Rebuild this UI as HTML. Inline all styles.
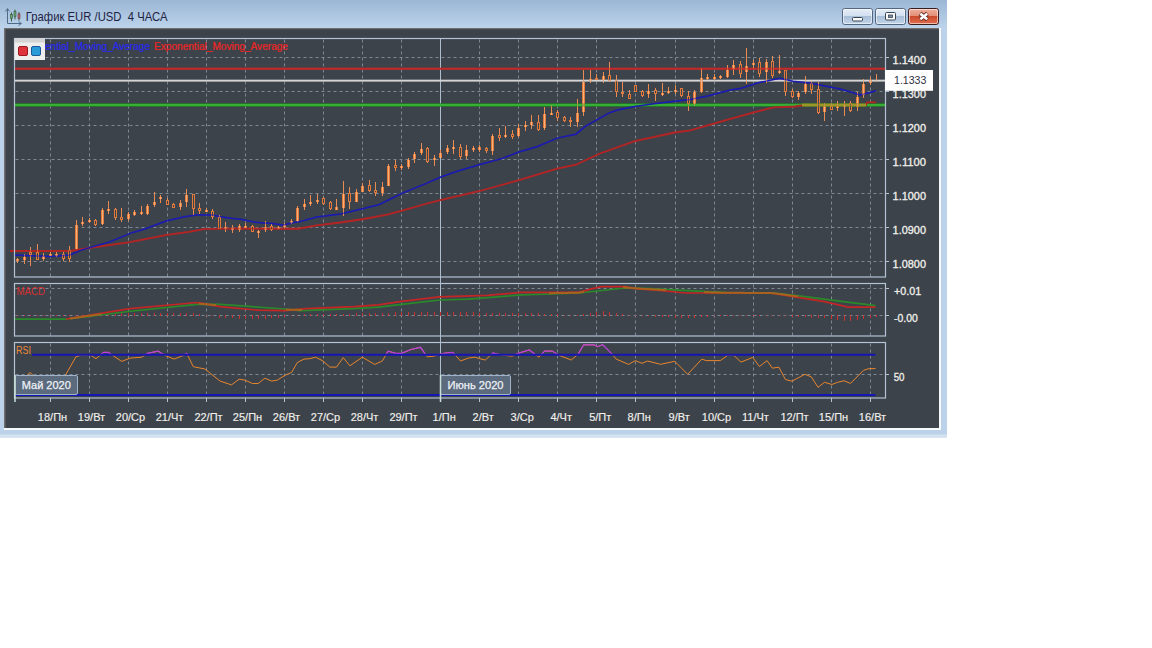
<!DOCTYPE html><html><head><meta charset="utf-8"><style>html,body{margin:0;padding:0;background:#fff;width:1152px;height:648px;overflow:hidden}svg{display:block}text{font-family:"Liberation Sans",sans-serif}</style></head><body>
<svg width="1152" height="648" viewBox="0 0 1152 648">
<defs><linearGradient id="tg" x1="0" y1="0" x2="0" y2="1"><stop offset="0" stop-color="#9bb6d4"/><stop offset="1" stop-color="#bcd3eb"/></linearGradient><linearGradient id="bg1" x1="0" y1="0" x2="0" y2="1"><stop offset="0" stop-color="#e6eef8"/><stop offset="0.45" stop-color="#d2e0f0"/><stop offset="0.5" stop-color="#a9bfd8"/><stop offset="1" stop-color="#c3d5ea"/></linearGradient><linearGradient id="bg2" x1="0" y1="0" x2="0" y2="1"><stop offset="0" stop-color="#f0b0a0"/><stop offset="0.45" stop-color="#e49078"/><stop offset="0.5" stop-color="#cc4a2c"/><stop offset="1" stop-color="#e07050"/></linearGradient></defs>
<rect x="0" y="0" width="947" height="437.5" fill="#bcd2ea"/>
<rect x="0" y="0" width="947" height="28" fill="url(#tg)"/>
<rect x="0" y="434.5" width="947" height="3" fill="#d4e1ef"/>
<rect x="5" y="29" width="934" height="399" fill="#3c434b"/>
<rect x="4" y="28" width="935" height="1.2" fill="#6f6e6c"/>
<rect x="4" y="28" width="1.5" height="400" fill="#6f6e6c"/>
<rect x="939" y="28" width="2" height="402" fill="#f6f9fc"/>
<rect x="4" y="428" width="937" height="2" fill="#f6f9fc"/>
<g fill="none" stroke-linecap="square"><path d="M7.5 9 V23.5 H21" stroke="#4f6a88" stroke-width="1"/><path d="M5.8 11 L7.5 8.8 L9.2 11 M19 21.8 L21.3 23.5 L19 25.2" stroke="#4f6a88" stroke-width="1"/><path d="M11.5 13 V21 M15 10 V19 M19 12.5 V20" stroke="#3e5a48" stroke-width="1"/></g><rect x="10.5" y="14.5" width="2" height="4" fill="#6aa86a" stroke="#305a40" stroke-width="0.6"/><rect x="14" y="11.5" width="2" height="5" fill="#6aa86a" stroke="#305a40" stroke-width="0.6"/><rect x="18" y="14" width="2" height="4.5" fill="#b07070" stroke="#6a3040" stroke-width="0.6"/>
<text x="25.8" y="21" font-size="11.9" fill="#221f44" textLength="141.7" lengthAdjust="spacingAndGlyphs" xml:space="preserve">График EUR /USD&#160; 4 ЧАСА</text>
<rect x="842.5" y="8.5" width="30" height="16" rx="2.2" fill="url(#bg1)" stroke="#55677e" stroke-width="1"/>
<rect x="843.5" y="9.5" width="28" height="14" rx="1.5" fill="none" stroke="rgba(255,255,255,0.55)" stroke-width="1"/>
<rect x="875.5" y="8.5" width="30" height="16" rx="2.2" fill="url(#bg1)" stroke="#55677e" stroke-width="1"/>
<rect x="876.5" y="9.5" width="28" height="14" rx="1.5" fill="none" stroke="rgba(255,255,255,0.55)" stroke-width="1"/>
<rect x="908.5" y="8.5" width="30" height="16" rx="2.2" fill="url(#bg2)" stroke="#3a1c1c" stroke-width="1"/>
<rect x="909.5" y="9.5" width="28" height="14" rx="1.5" fill="none" stroke="rgba(255,255,255,0.55)" stroke-width="1"/>
<rect x="852.5" y="17.5" width="10" height="3.5" rx="1" fill="#fafafa" stroke="#3a4656" stroke-width="1"/>
<rect x="885.5" y="12.5" width="10" height="7.5" rx="1" fill="#fafafa" stroke="#3a4656" stroke-width="1"/>
<rect x="888.5" y="15" width="4" height="2.5" fill="#7f8fa0" stroke="#3a4656" stroke-width="0.8"/>
<path d="M920 13.5 L927.5 19.5 M927.5 13.5 L920 19.5" stroke="#6a3028" stroke-width="4.4" stroke-linecap="butt"/>
<path d="M920.3 13.8 L927.2 19.2 M927.2 13.8 L920.3 19.2" stroke="#ffffff" stroke-width="2.6" stroke-linecap="butt"/>
<g stroke="#7e8892" stroke-width="1" stroke-dasharray="3,3" fill="none">
<path d="M50.5 39.5 V277"/>
<path d="M89.5 39.5 V277"/>
<path d="M128.5 39.5 V277"/>
<path d="M167.5 39.5 V277"/>
<path d="M206.5 39.5 V277"/>
<path d="M245.5 39.5 V277"/>
<path d="M284.5 39.5 V277"/>
<path d="M323.5 39.5 V277"/>
<path d="M362.5 39.5 V277"/>
<path d="M401.5 39.5 V277"/>
<path d="M479.5 39.5 V277"/>
<path d="M518.5 39.5 V277"/>
<path d="M557.5 39.5 V277"/>
<path d="M596.5 39.5 V277"/>
<path d="M635.5 39.5 V277"/>
<path d="M675.5 39.5 V277"/>
<path d="M714.5 39.5 V277"/>
<path d="M753.5 39.5 V277"/>
<path d="M792.5 39.5 V277"/>
<path d="M831.5 39.5 V277"/>
<path d="M870.5 39.5 V277"/>
<path d="M50.5 284.5 V336"/>
<path d="M89.5 284.5 V336"/>
<path d="M128.5 284.5 V336"/>
<path d="M167.5 284.5 V336"/>
<path d="M206.5 284.5 V336"/>
<path d="M245.5 284.5 V336"/>
<path d="M284.5 284.5 V336"/>
<path d="M323.5 284.5 V336"/>
<path d="M362.5 284.5 V336"/>
<path d="M401.5 284.5 V336"/>
<path d="M479.5 284.5 V336"/>
<path d="M518.5 284.5 V336"/>
<path d="M557.5 284.5 V336"/>
<path d="M596.5 284.5 V336"/>
<path d="M635.5 284.5 V336"/>
<path d="M675.5 284.5 V336"/>
<path d="M714.5 284.5 V336"/>
<path d="M753.5 284.5 V336"/>
<path d="M792.5 284.5 V336"/>
<path d="M831.5 284.5 V336"/>
<path d="M870.5 284.5 V336"/>
<path d="M50.5 343.5 V398"/>
<path d="M89.5 343.5 V398"/>
<path d="M128.5 343.5 V398"/>
<path d="M167.5 343.5 V398"/>
<path d="M206.5 343.5 V398"/>
<path d="M245.5 343.5 V398"/>
<path d="M284.5 343.5 V398"/>
<path d="M323.5 343.5 V398"/>
<path d="M362.5 343.5 V398"/>
<path d="M401.5 343.5 V398"/>
<path d="M479.5 343.5 V398"/>
<path d="M518.5 343.5 V398"/>
<path d="M557.5 343.5 V398"/>
<path d="M596.5 343.5 V398"/>
<path d="M635.5 343.5 V398"/>
<path d="M675.5 343.5 V398"/>
<path d="M714.5 343.5 V398"/>
<path d="M753.5 343.5 V398"/>
<path d="M792.5 343.5 V398"/>
<path d="M831.5 343.5 V398"/>
<path d="M870.5 343.5 V398"/>
<path d="M15.5 57.5 H885.5"/>
<path d="M15.5 91.5 H885.5"/>
<path d="M15.5 125.5 H885.5"/>
<path d="M15.5 159.5 H885.5"/>
<path d="M15.5 193.5 H885.5"/>
<path d="M15.5 227.5 H885.5"/>
<path d="M15.5 261.5 H885.5"/>
<path d="M15.5 288.5 H885.5"/>
<path d="M15.5 315.5 H885.5"/>
<path d="M15.5 374.5 H885.5"/>
</g>
<path d="M440.5 38.5 V402" stroke="#aebdcc" stroke-width="1"/>
<g stroke="#b3c3d3" stroke-width="1">
<path d="M885.5 57.5 H889"/>
<path d="M885.5 91.5 H889"/>
<path d="M885.5 125.5 H889"/>
<path d="M885.5 159.5 H889"/>
<path d="M885.5 193.5 H889"/>
<path d="M885.5 227.5 H889"/>
<path d="M885.5 261.5 H889"/>
<path d="M885.5 288.5 H889"/>
<path d="M885.5 315.5 H889"/>
<path d="M885.5 374.5 H889"/>
<path d="M50.5 398 V402"/>
<path d="M89.5 398 V402"/>
<path d="M128.5 398 V402"/>
<path d="M167.5 398 V402"/>
<path d="M206.5 398 V402"/>
<path d="M245.5 398 V402"/>
<path d="M284.5 398 V402"/>
<path d="M323.5 398 V402"/>
<path d="M362.5 398 V402"/>
<path d="M401.5 398 V402"/>
<path d="M440.5 398 V402"/>
<path d="M479.5 398 V402"/>
<path d="M518.5 398 V402"/>
<path d="M557.5 398 V402"/>
<path d="M596.5 398 V402"/>
<path d="M635.5 398 V402"/>
<path d="M675.5 398 V402"/>
<path d="M714.5 398 V402"/>
<path d="M753.5 398 V402"/>
<path d="M792.5 398 V402"/>
<path d="M831.5 398 V402"/>
<path d="M870.5 398 V402"/>
</g>
<path d="M15 68.8 H885" stroke="#c22a2a" stroke-width="2"/>
<path d="M15 80.6 H885" stroke="#d4d4d4" stroke-width="1.6"/>
<path d="M15 105 H885" stroke="#1c8a1c" stroke-width="3"/>
<path d="M15 105 H885" stroke="#52d452" stroke-width="1.2"/>
<polyline points="10,251 69.9,251 89.9,247.9 130,242.2 166.9,234.8 189,231.9 203.8,229.2 221.7,228.7 298,228.75 316.9,225.3 340.3,222.5 363.8,219 387.2,214.7 401.3,210.8 426.3,203.75 440.3,200.2 479,191.25 518.1,180.3 557.2,168.6 575.9,164.7 600,153.5 634.7,141.2 674.7,132.5 690.3,130.3 712.8,123.9 752.8,112.6 773.6,107.4 794.4,106.5 805,105 866,105 867,102.3 876,102.3" fill="none" stroke="#b02626" stroke-width="1.8"/>
<path d="M802 105 H866" stroke="#8a8424" stroke-width="3"/>
<path d="M802 105 H866" stroke="#b0a830" stroke-width="1.2"/>
<polyline points="15,255 50,256.6 69.9,255 81.9,249.9 109.8,241.9 130,233.4 144.8,229 166.9,220.8 186.1,216.4 196.4,214.9 212.6,214.9 221.5,217.1 233.3,218.6 242.2,219.4 255.4,222.3 274.6,223.8 283.5,225.3 290.9,223 300,221.6 316.9,217 340.3,213.9 363.8,208.4 379.4,204.5 401.3,193.6 426.3,183.4 440.3,177.2 455.6,171.7 479,164.7 502.5,158.4 518.1,152.2 536.9,146.7 557.2,138.1 575.9,134.2 585.3,126.4 596.3,120.2 608.8,113.1 617.4,110 634.7,106.5 652,103.9 674.7,101.3 690.3,99.5 707.6,96 730.2,90 740,88.6 760,82.3 780,78.3 793,81.3 810,82.9 825,86 840,89 850,91.7 860,95 870,92.5 876,90.8" fill="none" stroke="#1c1cb0" stroke-width="1.5"/>
<g shape-rendering="crispEdges">
<rect x="17" y="258" width="1" height="5" fill="#ea8c52"/>
<rect x="16" y="259" width="3" height="2" fill="#e2783a"/>
<rect x="17" y="259" width="1" height="2" fill="#f7b078"/>
<rect x="24" y="254" width="1" height="10" fill="#ea8c52"/>
<rect x="23" y="257" width="3" height="3" fill="#e2783a"/>
<rect x="24" y="257" width="1" height="3" fill="#f7b078"/>
<rect x="30" y="247" width="1" height="19" fill="#ea8c52"/>
<rect x="29" y="252" width="3" height="3" fill="#e2783a"/>
<rect x="30" y="253" width="1" height="1" fill="#3c434b"/>
<rect x="37" y="244" width="1" height="16" fill="#ea8c52"/>
<rect x="36" y="252" width="3" height="8" fill="#e2783a"/>
<rect x="37" y="253" width="1" height="6" fill="#3c434b"/>
<rect x="43" y="253" width="1" height="8" fill="#ea8c52"/>
<rect x="42" y="256" width="3" height="3" fill="#e2783a"/>
<rect x="43" y="256" width="1" height="3" fill="#f7b078"/>
<rect x="50" y="252" width="1" height="4" fill="#ea8c52"/>
<rect x="49" y="254" width="3" height="2" fill="#e2783a"/>
<rect x="50" y="254" width="1" height="2" fill="#f7b078"/>
<rect x="56" y="252" width="1" height="5" fill="#ea8c52"/>
<rect x="55" y="254" width="3" height="2" fill="#e2783a"/>
<rect x="56" y="254" width="1" height="2" fill="#f7b078"/>
<rect x="63" y="252" width="1" height="9" fill="#ea8c52"/>
<rect x="62" y="254" width="3" height="5" fill="#e2783a"/>
<rect x="63" y="255" width="1" height="3" fill="#3c434b"/>
<rect x="69" y="246" width="1" height="16" fill="#ea8c52"/>
<rect x="68" y="250" width="3" height="9" fill="#e2783a"/>
<rect x="69" y="251" width="1" height="7" fill="#3c434b"/>
<rect x="76" y="220" width="1" height="29" fill="#ea8c52"/>
<rect x="75" y="225" width="3" height="24" fill="#e2783a"/>
<rect x="76" y="225" width="1" height="24" fill="#f7b078"/>
<rect x="82" y="217" width="1" height="9" fill="#ea8c52"/>
<rect x="81" y="222" width="3" height="2" fill="#e2783a"/>
<rect x="82" y="222" width="1" height="2" fill="#f7b078"/>
<rect x="89" y="218" width="1" height="5" fill="#ea8c52"/>
<rect x="88" y="220" width="3" height="2" fill="#e2783a"/>
<rect x="89" y="220" width="1" height="2" fill="#f7b078"/>
<rect x="95" y="219" width="1" height="7" fill="#ea8c52"/>
<rect x="94" y="220" width="3" height="5" fill="#e2783a"/>
<rect x="95" y="221" width="1" height="3" fill="#3c434b"/>
<rect x="102" y="208" width="1" height="17" fill="#ea8c52"/>
<rect x="101" y="210" width="3" height="14" fill="#e2783a"/>
<rect x="102" y="210" width="1" height="14" fill="#f7b078"/>
<rect x="108" y="201" width="1" height="13" fill="#ea8c52"/>
<rect x="107" y="209" width="3" height="2" fill="#e2783a"/>
<rect x="108" y="209" width="1" height="2" fill="#f7b078"/>
<rect x="115" y="208" width="1" height="12" fill="#ea8c52"/>
<rect x="114" y="209" width="3" height="9" fill="#e2783a"/>
<rect x="115" y="210" width="1" height="7" fill="#3c434b"/>
<rect x="121" y="208" width="1" height="14" fill="#ea8c52"/>
<rect x="120" y="217" width="3" height="3" fill="#e2783a"/>
<rect x="121" y="218" width="1" height="1" fill="#3c434b"/>
<rect x="128" y="212" width="1" height="9" fill="#ea8c52"/>
<rect x="127" y="214" width="3" height="5" fill="#e2783a"/>
<rect x="128" y="214" width="1" height="5" fill="#f7b078"/>
<rect x="134" y="210" width="1" height="6" fill="#ea8c52"/>
<rect x="133" y="212" width="3" height="3" fill="#e2783a"/>
<rect x="134" y="212" width="1" height="3" fill="#f7b078"/>
<rect x="141" y="206" width="1" height="9" fill="#ea8c52"/>
<rect x="140" y="212" width="3" height="2" fill="#e2783a"/>
<rect x="141" y="212" width="1" height="2" fill="#f7b078"/>
<rect x="147" y="204" width="1" height="11" fill="#ea8c52"/>
<rect x="146" y="206" width="3" height="8" fill="#e2783a"/>
<rect x="147" y="206" width="1" height="8" fill="#f7b078"/>
<rect x="154" y="192" width="1" height="15" fill="#ea8c52"/>
<rect x="153" y="202" width="3" height="3" fill="#e2783a"/>
<rect x="154" y="202" width="1" height="3" fill="#f7b078"/>
<rect x="160" y="195" width="1" height="8" fill="#ea8c52"/>
<rect x="159" y="197" width="3" height="2" fill="#e2783a"/>
<rect x="160" y="197" width="1" height="2" fill="#f7b078"/>
<rect x="167" y="198" width="1" height="7" fill="#ea8c52"/>
<rect x="166" y="200" width="3" height="5" fill="#e2783a"/>
<rect x="167" y="201" width="1" height="3" fill="#3c434b"/>
<rect x="173" y="203" width="1" height="5" fill="#ea8c52"/>
<rect x="172" y="204" width="3" height="4" fill="#e2783a"/>
<rect x="173" y="205" width="1" height="2" fill="#3c434b"/>
<rect x="180" y="200" width="1" height="10" fill="#ea8c52"/>
<rect x="179" y="203" width="3" height="4" fill="#e2783a"/>
<rect x="180" y="203" width="1" height="4" fill="#f7b078"/>
<rect x="186" y="189" width="1" height="18" fill="#ea8c52"/>
<rect x="185" y="195" width="3" height="7" fill="#e2783a"/>
<rect x="186" y="195" width="1" height="7" fill="#f7b078"/>
<rect x="193" y="194" width="1" height="21" fill="#ea8c52"/>
<rect x="192" y="194" width="3" height="15" fill="#e2783a"/>
<rect x="193" y="195" width="1" height="13" fill="#3c434b"/>
<rect x="199" y="203" width="1" height="11" fill="#ea8c52"/>
<rect x="198" y="208" width="3" height="3" fill="#e2783a"/>
<rect x="199" y="209" width="1" height="1" fill="#3c434b"/>
<rect x="206" y="208" width="1" height="4" fill="#ea8c52"/>
<rect x="205" y="210" width="3" height="2" fill="#e2783a"/>
<rect x="206" y="210" width="1" height="2" fill="#f7b078"/>
<rect x="212" y="209" width="1" height="10" fill="#ea8c52"/>
<rect x="211" y="211" width="3" height="6" fill="#e2783a"/>
<rect x="212" y="212" width="1" height="4" fill="#3c434b"/>
<rect x="219" y="215" width="1" height="14" fill="#ea8c52"/>
<rect x="218" y="217" width="3" height="12" fill="#e2783a"/>
<rect x="219" y="218" width="1" height="10" fill="#3c434b"/>
<rect x="225" y="222" width="1" height="10" fill="#ea8c52"/>
<rect x="224" y="227" width="3" height="2" fill="#e2783a"/>
<rect x="225" y="227" width="1" height="2" fill="#f7b078"/>
<rect x="232" y="225" width="1" height="8" fill="#ea8c52"/>
<rect x="231" y="228" width="3" height="2" fill="#e2783a"/>
<rect x="232" y="228" width="1" height="2" fill="#f7b078"/>
<rect x="239" y="224" width="1" height="8" fill="#ea8c52"/>
<rect x="238" y="226" width="3" height="4" fill="#e2783a"/>
<rect x="239" y="226" width="1" height="4" fill="#f7b078"/>
<rect x="245" y="223" width="1" height="4" fill="#ea8c52"/>
<rect x="244" y="226" width="3" height="2" fill="#e2783a"/>
<rect x="245" y="226" width="1" height="2" fill="#f7b078"/>
<rect x="252" y="225" width="1" height="7" fill="#ea8c52"/>
<rect x="251" y="226" width="3" height="6" fill="#e2783a"/>
<rect x="252" y="227" width="1" height="4" fill="#3c434b"/>
<rect x="258" y="230" width="1" height="8" fill="#ea8c52"/>
<rect x="257" y="231" width="3" height="2" fill="#e2783a"/>
<rect x="258" y="231" width="1" height="2" fill="#f7b078"/>
<rect x="265" y="221" width="1" height="11" fill="#ea8c52"/>
<rect x="264" y="227" width="3" height="3" fill="#e2783a"/>
<rect x="265" y="227" width="1" height="3" fill="#f7b078"/>
<rect x="271" y="224" width="1" height="7" fill="#ea8c52"/>
<rect x="270" y="226" width="3" height="4" fill="#e2783a"/>
<rect x="271" y="227" width="1" height="2" fill="#3c434b"/>
<rect x="278" y="226" width="1" height="3" fill="#ea8c52"/>
<rect x="277" y="227" width="3" height="2" fill="#e2783a"/>
<rect x="278" y="227" width="1" height="2" fill="#f7b078"/>
<rect x="284" y="223" width="1" height="6" fill="#ea8c52"/>
<rect x="283" y="225" width="3" height="2" fill="#e2783a"/>
<rect x="284" y="225" width="1" height="2" fill="#f7b078"/>
<rect x="291" y="219" width="1" height="5" fill="#ea8c52"/>
<rect x="290" y="221" width="3" height="2" fill="#e2783a"/>
<rect x="291" y="221" width="1" height="2" fill="#f7b078"/>
<rect x="297" y="206" width="1" height="16" fill="#ea8c52"/>
<rect x="296" y="208" width="3" height="13" fill="#e2783a"/>
<rect x="297" y="208" width="1" height="13" fill="#f7b078"/>
<rect x="304" y="199" width="1" height="11" fill="#ea8c52"/>
<rect x="303" y="204" width="3" height="3" fill="#e2783a"/>
<rect x="304" y="204" width="1" height="3" fill="#f7b078"/>
<rect x="310" y="195" width="1" height="11" fill="#ea8c52"/>
<rect x="309" y="202" width="3" height="2" fill="#e2783a"/>
<rect x="310" y="202" width="1" height="2" fill="#f7b078"/>
<rect x="317" y="194" width="1" height="10" fill="#ea8c52"/>
<rect x="316" y="200" width="3" height="2" fill="#e2783a"/>
<rect x="317" y="200" width="1" height="2" fill="#f7b078"/>
<rect x="323" y="197" width="1" height="8" fill="#ea8c52"/>
<rect x="322" y="198" width="3" height="6" fill="#e2783a"/>
<rect x="323" y="199" width="1" height="4" fill="#3c434b"/>
<rect x="330" y="201" width="1" height="9" fill="#ea8c52"/>
<rect x="329" y="202" width="3" height="7" fill="#e2783a"/>
<rect x="330" y="203" width="1" height="5" fill="#3c434b"/>
<rect x="336" y="199" width="1" height="11" fill="#ea8c52"/>
<rect x="335" y="207" width="3" height="3" fill="#e2783a"/>
<rect x="336" y="207" width="1" height="3" fill="#f7b078"/>
<rect x="343" y="181" width="1" height="35" fill="#ea8c52"/>
<rect x="342" y="194" width="3" height="14" fill="#e2783a"/>
<rect x="343" y="194" width="1" height="14" fill="#f7b078"/>
<rect x="349" y="187" width="1" height="22" fill="#ea8c52"/>
<rect x="348" y="193" width="3" height="9" fill="#e2783a"/>
<rect x="349" y="194" width="1" height="7" fill="#3c434b"/>
<rect x="356" y="189" width="1" height="13" fill="#ea8c52"/>
<rect x="355" y="192" width="3" height="10" fill="#e2783a"/>
<rect x="356" y="192" width="1" height="10" fill="#f7b078"/>
<rect x="362" y="183" width="1" height="9" fill="#ea8c52"/>
<rect x="361" y="186" width="3" height="6" fill="#e2783a"/>
<rect x="362" y="186" width="1" height="6" fill="#f7b078"/>
<rect x="369" y="180" width="1" height="12" fill="#ea8c52"/>
<rect x="368" y="185" width="3" height="6" fill="#e2783a"/>
<rect x="369" y="186" width="1" height="4" fill="#3c434b"/>
<rect x="375" y="182" width="1" height="14" fill="#ea8c52"/>
<rect x="374" y="190" width="3" height="3" fill="#e2783a"/>
<rect x="375" y="191" width="1" height="1" fill="#3c434b"/>
<rect x="382" y="182" width="1" height="14" fill="#ea8c52"/>
<rect x="381" y="187" width="3" height="6" fill="#e2783a"/>
<rect x="382" y="187" width="1" height="6" fill="#f7b078"/>
<rect x="388" y="164" width="1" height="22" fill="#ea8c52"/>
<rect x="387" y="166" width="3" height="20" fill="#e2783a"/>
<rect x="388" y="166" width="1" height="20" fill="#f7b078"/>
<rect x="395" y="160" width="1" height="11" fill="#ea8c52"/>
<rect x="394" y="165" width="3" height="3" fill="#e2783a"/>
<rect x="395" y="166" width="1" height="1" fill="#3c434b"/>
<rect x="401" y="164" width="1" height="6" fill="#ea8c52"/>
<rect x="400" y="166" width="3" height="2" fill="#e2783a"/>
<rect x="401" y="166" width="1" height="2" fill="#f7b078"/>
<rect x="408" y="158" width="1" height="11" fill="#ea8c52"/>
<rect x="407" y="160" width="3" height="7" fill="#e2783a"/>
<rect x="408" y="160" width="1" height="7" fill="#f7b078"/>
<rect x="414" y="152" width="1" height="11" fill="#ea8c52"/>
<rect x="413" y="154" width="3" height="5" fill="#e2783a"/>
<rect x="414" y="154" width="1" height="5" fill="#f7b078"/>
<rect x="421" y="143" width="1" height="12" fill="#ea8c52"/>
<rect x="420" y="149" width="3" height="4" fill="#e2783a"/>
<rect x="421" y="149" width="1" height="4" fill="#f7b078"/>
<rect x="427" y="147" width="1" height="16" fill="#ea8c52"/>
<rect x="426" y="148" width="3" height="14" fill="#e2783a"/>
<rect x="427" y="149" width="1" height="12" fill="#3c434b"/>
<rect x="434" y="155" width="1" height="11" fill="#ea8c52"/>
<rect x="433" y="158" width="3" height="2" fill="#e2783a"/>
<rect x="434" y="158" width="1" height="2" fill="#f7b078"/>
<rect x="440" y="150" width="1" height="8" fill="#ea8c52"/>
<rect x="439" y="153" width="3" height="5" fill="#e2783a"/>
<rect x="440" y="153" width="1" height="5" fill="#f7b078"/>
<rect x="447" y="145" width="1" height="9" fill="#ea8c52"/>
<rect x="446" y="148" width="3" height="4" fill="#e2783a"/>
<rect x="447" y="148" width="1" height="4" fill="#f7b078"/>
<rect x="453" y="140" width="1" height="14" fill="#ea8c52"/>
<rect x="452" y="147" width="3" height="2" fill="#e2783a"/>
<rect x="453" y="147" width="1" height="2" fill="#f7b078"/>
<rect x="460" y="144" width="1" height="15" fill="#ea8c52"/>
<rect x="459" y="147" width="3" height="10" fill="#e2783a"/>
<rect x="460" y="148" width="1" height="8" fill="#3c434b"/>
<rect x="466" y="145" width="1" height="14" fill="#ea8c52"/>
<rect x="465" y="150" width="3" height="6" fill="#e2783a"/>
<rect x="466" y="150" width="1" height="6" fill="#f7b078"/>
<rect x="473" y="146" width="1" height="6" fill="#ea8c52"/>
<rect x="472" y="148" width="3" height="2" fill="#e2783a"/>
<rect x="473" y="148" width="1" height="2" fill="#f7b078"/>
<rect x="479" y="145" width="1" height="7" fill="#ea8c52"/>
<rect x="478" y="147" width="3" height="3" fill="#e2783a"/>
<rect x="479" y="147" width="1" height="3" fill="#f7b078"/>
<rect x="486" y="147" width="1" height="6" fill="#ea8c52"/>
<rect x="485" y="148" width="3" height="3" fill="#e2783a"/>
<rect x="486" y="149" width="1" height="1" fill="#3c434b"/>
<rect x="492" y="134" width="1" height="21" fill="#ea8c52"/>
<rect x="491" y="136" width="3" height="15" fill="#e2783a"/>
<rect x="492" y="136" width="1" height="15" fill="#f7b078"/>
<rect x="499" y="128" width="1" height="13" fill="#ea8c52"/>
<rect x="498" y="135" width="3" height="3" fill="#e2783a"/>
<rect x="499" y="136" width="1" height="1" fill="#3c434b"/>
<rect x="505" y="126" width="1" height="12" fill="#ea8c52"/>
<rect x="504" y="135" width="3" height="2" fill="#e2783a"/>
<rect x="505" y="135" width="1" height="2" fill="#f7b078"/>
<rect x="512" y="130" width="1" height="9" fill="#ea8c52"/>
<rect x="511" y="134" width="3" height="3" fill="#e2783a"/>
<rect x="512" y="135" width="1" height="1" fill="#3c434b"/>
<rect x="518" y="124" width="1" height="13" fill="#ea8c52"/>
<rect x="517" y="128" width="3" height="8" fill="#e2783a"/>
<rect x="518" y="128" width="1" height="8" fill="#f7b078"/>
<rect x="525" y="121" width="1" height="10" fill="#ea8c52"/>
<rect x="524" y="125" width="3" height="2" fill="#e2783a"/>
<rect x="525" y="125" width="1" height="2" fill="#f7b078"/>
<rect x="531" y="115" width="1" height="14" fill="#ea8c52"/>
<rect x="530" y="122" width="3" height="3" fill="#e2783a"/>
<rect x="531" y="122" width="1" height="3" fill="#f7b078"/>
<rect x="538" y="115" width="1" height="16" fill="#ea8c52"/>
<rect x="537" y="122" width="3" height="8" fill="#e2783a"/>
<rect x="538" y="123" width="1" height="6" fill="#3c434b"/>
<rect x="544" y="107" width="1" height="23" fill="#ea8c52"/>
<rect x="543" y="114" width="3" height="14" fill="#e2783a"/>
<rect x="544" y="114" width="1" height="14" fill="#f7b078"/>
<rect x="551" y="105" width="1" height="10" fill="#ea8c52"/>
<rect x="550" y="113" width="3" height="2" fill="#e2783a"/>
<rect x="551" y="113" width="1" height="2" fill="#f7b078"/>
<rect x="557" y="110" width="1" height="11" fill="#ea8c52"/>
<rect x="556" y="112" width="3" height="6" fill="#e2783a"/>
<rect x="557" y="113" width="1" height="4" fill="#3c434b"/>
<rect x="564" y="116" width="1" height="6" fill="#ea8c52"/>
<rect x="563" y="117" width="3" height="4" fill="#e2783a"/>
<rect x="564" y="118" width="1" height="2" fill="#3c434b"/>
<rect x="570" y="117" width="1" height="10" fill="#ea8c52"/>
<rect x="569" y="120" width="3" height="2" fill="#e2783a"/>
<rect x="577" y="99" width="1" height="28" fill="#ea8c52"/>
<rect x="576" y="113" width="3" height="9" fill="#e2783a"/>
<rect x="577" y="113" width="1" height="9" fill="#f7b078"/>
<rect x="583" y="70" width="1" height="46" fill="#ea8c52"/>
<rect x="582" y="82" width="3" height="30" fill="#e2783a"/>
<rect x="583" y="82" width="1" height="30" fill="#f7b078"/>
<rect x="590" y="70" width="1" height="13" fill="#ea8c52"/>
<rect x="589" y="79" width="3" height="2" fill="#e2783a"/>
<rect x="590" y="79" width="1" height="2" fill="#f7b078"/>
<rect x="596" y="74" width="1" height="6" fill="#ea8c52"/>
<rect x="595" y="78" width="3" height="2" fill="#e2783a"/>
<rect x="603" y="72" width="1" height="11" fill="#ea8c52"/>
<rect x="602" y="76" width="3" height="4" fill="#e2783a"/>
<rect x="603" y="76" width="1" height="4" fill="#f7b078"/>
<rect x="609" y="62" width="1" height="20" fill="#ea8c52"/>
<rect x="608" y="75" width="3" height="6" fill="#e2783a"/>
<rect x="609" y="76" width="1" height="4" fill="#3c434b"/>
<rect x="616" y="75" width="1" height="22" fill="#ea8c52"/>
<rect x="615" y="80" width="3" height="12" fill="#e2783a"/>
<rect x="616" y="81" width="1" height="10" fill="#3c434b"/>
<rect x="622" y="82" width="1" height="15" fill="#ea8c52"/>
<rect x="621" y="92" width="3" height="2" fill="#e2783a"/>
<rect x="629" y="90" width="1" height="9" fill="#ea8c52"/>
<rect x="628" y="94" width="3" height="5" fill="#e2783a"/>
<rect x="629" y="95" width="1" height="3" fill="#3c434b"/>
<rect x="635" y="85" width="1" height="7" fill="#ea8c52"/>
<rect x="634" y="85" width="3" height="7" fill="#e2783a"/>
<rect x="635" y="86" width="1" height="5" fill="#3c434b"/>
<rect x="642" y="90" width="1" height="7" fill="#ea8c52"/>
<rect x="641" y="91" width="3" height="5" fill="#e2783a"/>
<rect x="642" y="92" width="1" height="3" fill="#3c434b"/>
<rect x="648" y="84" width="1" height="14" fill="#ea8c52"/>
<rect x="647" y="91" width="3" height="3" fill="#e2783a"/>
<rect x="648" y="91" width="1" height="3" fill="#f7b078"/>
<rect x="655" y="88" width="1" height="13" fill="#ea8c52"/>
<rect x="654" y="90" width="3" height="4" fill="#e2783a"/>
<rect x="655" y="91" width="1" height="2" fill="#3c434b"/>
<rect x="662" y="83" width="1" height="13" fill="#ea8c52"/>
<rect x="661" y="93" width="3" height="2" fill="#e2783a"/>
<rect x="662" y="93" width="1" height="2" fill="#f7b078"/>
<rect x="668" y="87" width="1" height="7" fill="#ea8c52"/>
<rect x="667" y="91" width="3" height="2" fill="#e2783a"/>
<rect x="668" y="91" width="1" height="2" fill="#f7b078"/>
<rect x="675" y="85" width="1" height="9" fill="#ea8c52"/>
<rect x="674" y="90" width="3" height="2" fill="#e2783a"/>
<rect x="675" y="90" width="1" height="2" fill="#f7b078"/>
<rect x="681" y="88" width="1" height="9" fill="#ea8c52"/>
<rect x="680" y="88" width="3" height="8" fill="#e2783a"/>
<rect x="681" y="89" width="1" height="6" fill="#3c434b"/>
<rect x="688" y="91" width="1" height="20" fill="#ea8c52"/>
<rect x="687" y="96" width="3" height="8" fill="#e2783a"/>
<rect x="688" y="97" width="1" height="6" fill="#3c434b"/>
<rect x="694" y="90" width="1" height="16" fill="#ea8c52"/>
<rect x="693" y="92" width="3" height="12" fill="#e2783a"/>
<rect x="694" y="92" width="1" height="12" fill="#f7b078"/>
<rect x="701" y="68" width="1" height="25" fill="#ea8c52"/>
<rect x="700" y="78" width="3" height="14" fill="#e2783a"/>
<rect x="701" y="78" width="1" height="14" fill="#f7b078"/>
<rect x="707" y="74" width="1" height="6" fill="#ea8c52"/>
<rect x="706" y="77" width="3" height="2" fill="#e2783a"/>
<rect x="707" y="77" width="1" height="2" fill="#f7b078"/>
<rect x="714" y="74" width="1" height="7" fill="#ea8c52"/>
<rect x="713" y="77" width="3" height="2" fill="#e2783a"/>
<rect x="714" y="77" width="1" height="2" fill="#f7b078"/>
<rect x="720" y="75" width="1" height="4" fill="#ea8c52"/>
<rect x="719" y="76" width="3" height="2" fill="#e2783a"/>
<rect x="720" y="76" width="1" height="2" fill="#f7b078"/>
<rect x="727" y="65" width="1" height="13" fill="#ea8c52"/>
<rect x="726" y="70" width="3" height="7" fill="#e2783a"/>
<rect x="727" y="70" width="1" height="7" fill="#f7b078"/>
<rect x="733" y="60" width="1" height="15" fill="#ea8c52"/>
<rect x="732" y="65" width="3" height="4" fill="#e2783a"/>
<rect x="733" y="65" width="1" height="4" fill="#f7b078"/>
<rect x="740" y="61" width="1" height="17" fill="#ea8c52"/>
<rect x="739" y="64" width="3" height="10" fill="#e2783a"/>
<rect x="740" y="65" width="1" height="8" fill="#3c434b"/>
<rect x="746" y="48" width="1" height="36" fill="#ea8c52"/>
<rect x="745" y="66" width="3" height="6" fill="#e2783a"/>
<rect x="746" y="66" width="1" height="6" fill="#f7b078"/>
<rect x="753" y="60" width="1" height="9" fill="#ea8c52"/>
<rect x="752" y="63" width="3" height="2" fill="#e2783a"/>
<rect x="753" y="63" width="1" height="2" fill="#f7b078"/>
<rect x="759" y="58" width="1" height="19" fill="#ea8c52"/>
<rect x="758" y="62" width="3" height="12" fill="#e2783a"/>
<rect x="759" y="63" width="1" height="10" fill="#3c434b"/>
<rect x="766" y="59" width="1" height="24" fill="#ea8c52"/>
<rect x="765" y="62" width="3" height="10" fill="#e2783a"/>
<rect x="766" y="62" width="1" height="10" fill="#f7b078"/>
<rect x="772" y="56" width="1" height="22" fill="#ea8c52"/>
<rect x="771" y="61" width="3" height="15" fill="#e2783a"/>
<rect x="772" y="62" width="1" height="13" fill="#3c434b"/>
<rect x="779" y="55" width="1" height="19" fill="#ea8c52"/>
<rect x="778" y="71" width="3" height="2" fill="#e2783a"/>
<rect x="779" y="71" width="1" height="2" fill="#f7b078"/>
<rect x="785" y="70" width="1" height="26" fill="#ea8c52"/>
<rect x="784" y="70" width="3" height="22" fill="#e2783a"/>
<rect x="785" y="71" width="1" height="20" fill="#3c434b"/>
<rect x="792" y="89" width="1" height="9" fill="#ea8c52"/>
<rect x="791" y="91" width="3" height="6" fill="#e2783a"/>
<rect x="792" y="92" width="1" height="4" fill="#3c434b"/>
<rect x="798" y="91" width="1" height="9" fill="#ea8c52"/>
<rect x="797" y="93" width="3" height="4" fill="#e2783a"/>
<rect x="798" y="93" width="1" height="4" fill="#f7b078"/>
<rect x="805" y="76" width="1" height="18" fill="#ea8c52"/>
<rect x="804" y="84" width="3" height="8" fill="#e2783a"/>
<rect x="805" y="84" width="1" height="8" fill="#f7b078"/>
<rect x="811" y="81" width="1" height="13" fill="#ea8c52"/>
<rect x="810" y="83" width="3" height="7" fill="#e2783a"/>
<rect x="811" y="84" width="1" height="5" fill="#3c434b"/>
<rect x="818" y="82" width="1" height="32" fill="#ea8c52"/>
<rect x="817" y="89" width="3" height="24" fill="#e2783a"/>
<rect x="818" y="90" width="1" height="22" fill="#3c434b"/>
<rect x="824" y="103" width="1" height="18" fill="#ea8c52"/>
<rect x="823" y="106" width="3" height="6" fill="#e2783a"/>
<rect x="824" y="106" width="1" height="6" fill="#f7b078"/>
<rect x="831" y="103" width="1" height="7" fill="#ea8c52"/>
<rect x="830" y="106" width="3" height="4" fill="#e2783a"/>
<rect x="831" y="107" width="1" height="2" fill="#3c434b"/>
<rect x="837" y="101" width="1" height="10" fill="#ea8c52"/>
<rect x="836" y="106" width="3" height="2" fill="#e2783a"/>
<rect x="837" y="106" width="1" height="2" fill="#f7b078"/>
<rect x="844" y="101" width="1" height="15" fill="#ea8c52"/>
<rect x="843" y="105" width="3" height="2" fill="#e2783a"/>
<rect x="844" y="105" width="1" height="2" fill="#f7b078"/>
<rect x="850" y="101" width="1" height="11" fill="#ea8c52"/>
<rect x="849" y="103" width="3" height="8" fill="#e2783a"/>
<rect x="850" y="104" width="1" height="6" fill="#3c434b"/>
<rect x="857" y="92" width="1" height="19" fill="#ea8c52"/>
<rect x="856" y="97" width="3" height="10" fill="#e2783a"/>
<rect x="857" y="97" width="1" height="10" fill="#f7b078"/>
<rect x="863" y="79" width="1" height="19" fill="#ea8c52"/>
<rect x="862" y="84" width="3" height="11" fill="#e2783a"/>
<rect x="863" y="84" width="1" height="11" fill="#f7b078"/>
<rect x="870" y="77" width="1" height="8" fill="#ea8c52"/>
<rect x="869" y="80" width="3" height="3" fill="#e2783a"/>
<rect x="870" y="80" width="1" height="3" fill="#f7b078"/>
<rect x="876" y="74" width="1" height="8" fill="#ea8c52"/>
</g>
<g opacity="0.5">
<path d="M15 68.8 H885" stroke="#c22a2a" stroke-width="2"/>
<path d="M15 80.6 H885" stroke="#d4d4d4" stroke-width="1.6"/>
<path d="M15 105 H885" stroke="#1c8a1c" stroke-width="3"/>
<path d="M15 105 H885" stroke="#52d452" stroke-width="1.2"/>
<polyline points="10,251 69.9,251 89.9,247.9 130,242.2 166.9,234.8 189,231.9 203.8,229.2 221.7,228.7 298,228.75 316.9,225.3 340.3,222.5 363.8,219 387.2,214.7 401.3,210.8 426.3,203.75 440.3,200.2 479,191.25 518.1,180.3 557.2,168.6 575.9,164.7 600,153.5 634.7,141.2 674.7,132.5 690.3,130.3 712.8,123.9 752.8,112.6 773.6,107.4 794.4,106.5 805,105 866,105 867,102.3 876,102.3" fill="none" stroke="#b02626" stroke-width="1.8"/>
<path d="M802 105 H866" stroke="#8a8424" stroke-width="3"/>
<path d="M802 105 H866" stroke="#b0a830" stroke-width="1.2"/>
<polyline points="15,255 50,256.6 69.9,255 81.9,249.9 109.8,241.9 130,233.4 144.8,229 166.9,220.8 186.1,216.4 196.4,214.9 212.6,214.9 221.5,217.1 233.3,218.6 242.2,219.4 255.4,222.3 274.6,223.8 283.5,225.3 290.9,223 300,221.6 316.9,217 340.3,213.9 363.8,208.4 379.4,204.5 401.3,193.6 426.3,183.4 440.3,177.2 455.6,171.7 479,164.7 502.5,158.4 518.1,152.2 536.9,146.7 557.2,138.1 575.9,134.2 585.3,126.4 596.3,120.2 608.8,113.1 617.4,110 634.7,106.5 652,103.9 674.7,101.3 690.3,99.5 707.6,96 730.2,90 740,88.6 760,82.3 780,78.3 793,81.3 810,82.9 825,86 840,89 850,91.7 860,95 870,92.5 876,90.8" fill="none" stroke="#1c1cb0" stroke-width="1.5"/>
</g>
<g fill="#c83232" shape-rendering="crispEdges">
<rect x="17" y="315" width="1" height="1" />
<rect x="24" y="315" width="1" height="1" />
<rect x="30" y="315" width="1" height="1" />
<rect x="37" y="315" width="1" height="1" />
<rect x="43" y="315" width="1" height="1" />
<rect x="50" y="315" width="1" height="1" />
<rect x="56" y="315" width="1" height="1" />
<rect x="63" y="315" width="1" height="1" />
<rect x="69" y="315" width="1" height="1" />
<rect x="76" y="315" width="1" height="1" />
<rect x="82" y="315" width="1" height="1" />
<rect x="89" y="315" width="1" height="1" />
<rect x="95" y="314" width="1" height="2" />
<rect x="102" y="314" width="1" height="2" />
<rect x="108" y="314" width="1" height="2" />
<rect x="115" y="313" width="1" height="3" />
<rect x="121" y="313" width="1" height="3" />
<rect x="128" y="313" width="1" height="3" />
<rect x="134" y="313" width="1" height="3" />
<rect x="141" y="313" width="1" height="3" />
<rect x="147" y="313" width="1" height="3" />
<rect x="154" y="313" width="1" height="3" />
<rect x="160" y="313" width="1" height="3" />
<rect x="167" y="313" width="1" height="3" />
<rect x="173" y="313" width="1" height="3" />
<rect x="180" y="313" width="1" height="3" />
<rect x="186" y="313" width="1" height="3" />
<rect x="193" y="313" width="1" height="3" />
<rect x="199" y="314" width="1" height="2" />
<rect x="206" y="315" width="1" height="1" />
<rect x="212" y="315" width="1" height="1" />
<rect x="219" y="315" width="1" height="3" />
<rect x="225" y="315" width="1" height="3" />
<rect x="232" y="315" width="1" height="3" />
<rect x="239" y="315" width="1" height="4" />
<rect x="245" y="315" width="1" height="4" />
<rect x="252" y="315" width="1" height="4" />
<rect x="258" y="315" width="1" height="4" />
<rect x="265" y="315" width="1" height="4" />
<rect x="271" y="315" width="1" height="3" />
<rect x="278" y="315" width="1" height="3" />
<rect x="284" y="315" width="1" height="2" />
<rect x="291" y="315" width="1" height="1" />
<rect x="297" y="315" width="1" height="1" />
<rect x="304" y="314" width="1" height="2" />
<rect x="310" y="314" width="1" height="2" />
<rect x="317" y="314" width="1" height="2" />
<rect x="323" y="314" width="1" height="2" />
<rect x="330" y="314" width="1" height="2" />
<rect x="336" y="314" width="1" height="2" />
<rect x="343" y="314" width="1" height="2" />
<rect x="349" y="314" width="1" height="2" />
<rect x="356" y="313" width="1" height="3" />
<rect x="362" y="313" width="1" height="3" />
<rect x="369" y="313" width="1" height="3" />
<rect x="375" y="313" width="1" height="3" />
<rect x="382" y="313" width="1" height="3" />
<rect x="388" y="313" width="1" height="3" />
<rect x="395" y="312" width="1" height="4" />
<rect x="401" y="312" width="1" height="4" />
<rect x="408" y="312" width="1" height="4" />
<rect x="414" y="312" width="1" height="4" />
<rect x="421" y="312" width="1" height="4" />
<rect x="427" y="312" width="1" height="4" />
<rect x="434" y="312" width="1" height="4" />
<rect x="440" y="312" width="1" height="4" />
<rect x="447" y="312" width="1" height="4" />
<rect x="453" y="312" width="1" height="4" />
<rect x="460" y="312" width="1" height="4" />
<rect x="466" y="312" width="1" height="4" />
<rect x="473" y="312" width="1" height="4" />
<rect x="479" y="313" width="1" height="3" />
<rect x="486" y="313" width="1" height="3" />
<rect x="492" y="313" width="1" height="3" />
<rect x="499" y="313" width="1" height="3" />
<rect x="505" y="313" width="1" height="3" />
<rect x="512" y="313" width="1" height="3" />
<rect x="518" y="313" width="1" height="3" />
<rect x="525" y="313" width="1" height="3" />
<rect x="531" y="313" width="1" height="3" />
<rect x="538" y="313" width="1" height="3" />
<rect x="544" y="314" width="1" height="2" />
<rect x="551" y="314" width="1" height="2" />
<rect x="557" y="314" width="1" height="2" />
<rect x="564" y="315" width="1" height="1" />
<rect x="570" y="315" width="1" height="1" />
<rect x="577" y="315" width="1" height="1" />
<rect x="583" y="314" width="1" height="2" />
<rect x="590" y="313" width="1" height="3" />
<rect x="596" y="312" width="1" height="4" />
<rect x="603" y="311" width="1" height="5" />
<rect x="609" y="312" width="1" height="4" />
<rect x="616" y="313" width="1" height="3" />
<rect x="622" y="314" width="1" height="2" />
<rect x="629" y="315" width="1" height="1" />
<rect x="635" y="315" width="1" height="1" />
<rect x="642" y="315" width="1" height="1" />
<rect x="648" y="315" width="1" height="1" />
<rect x="655" y="315" width="1" height="2" />
<rect x="662" y="315" width="1" height="2" />
<rect x="668" y="315" width="1" height="2" />
<rect x="675" y="315" width="1" height="3" />
<rect x="681" y="315" width="1" height="3" />
<rect x="688" y="315" width="1" height="3" />
<rect x="694" y="315" width="1" height="3" />
<rect x="701" y="315" width="1" height="2" />
<rect x="707" y="315" width="1" height="2" />
<rect x="714" y="315" width="1" height="1" />
<rect x="720" y="315" width="1" height="1" />
<rect x="727" y="315" width="1" height="1" />
<rect x="733" y="315" width="1" height="1" />
<rect x="740" y="315" width="1" height="1" />
<rect x="746" y="315" width="1" height="1" />
<rect x="753" y="315" width="1" height="1" />
<rect x="759" y="315" width="1" height="1" />
<rect x="766" y="315" width="1" height="1" />
<rect x="772" y="315" width="1" height="1" />
<rect x="779" y="315" width="1" height="1" />
<rect x="785" y="315" width="1" height="1" />
<rect x="792" y="315" width="1" height="2" />
<rect x="798" y="315" width="1" height="2" />
<rect x="805" y="315" width="1" height="2" />
<rect x="811" y="315" width="1" height="3" />
<rect x="818" y="315" width="1" height="3" />
<rect x="824" y="315" width="1" height="3" />
<rect x="831" y="315" width="1" height="4" />
<rect x="837" y="315" width="1" height="5" />
<rect x="844" y="315" width="1" height="6" />
<rect x="850" y="315" width="1" height="6" />
<rect x="857" y="315" width="1" height="5" />
<rect x="863" y="315" width="1" height="4" />
<rect x="870" y="315" width="1" height="3" />
<rect x="876" y="315" width="1" height="2" />
</g>
<polyline points="15,319.2 66.3,319.2 128.4,311.5 197,304.4 220,304.4 285,309 300,310.6 353.7,308.6 378.5,307.1 401.4,304.4 440,300 468.2,299.1 521.7,294.9 579,293 601.9,290.5 624.8,288 650,288.6 683.4,290.4 726.8,292.6 774.5,293 802.8,296.3 835.3,300.6 875.5,305.6" fill="none" stroke="#2a8a2a" stroke-width="1.7"/>
<polyline points="66,319 130,308.6 197,302.5 204,303.7 220,306.7 258,310.2 285,310.6 306,308.6 353.7,306.7 378.5,304.8 401.4,301.4 439.6,296.8 487.3,295.3 521.7,292.4 579,292.4 592.3,288.6 601.9,286.7 624.8,286.7 636.3,288.6 659.5,290.4 685.6,293 722.5,293 770.2,293 791.9,296.3 824.5,301.7 848.3,307.1 875.5,307.1" fill="none" stroke="#c42626" stroke-width="1.7"/>
<polyline points="70,318.55 71,318.4 72,318.26 73,318.12 74,317.97 75,317.83 76,317.69 77,317.54 78,317.4 79,317.26 80,317.11 81,316.97 82,316.83 83,316.68 84,316.54 85,316.4 86,316.25 87,316.11 88,315.97 89,315.82 90,315.68 91,315.54 92,315.39 93,315.25 94,315.11 95,314.96 96,314.82 97,314.68 98,314.53 99,314.39 100,314.25 101,314.1" fill="none" stroke="#a8621e" stroke-width="2"/>
<polyline points="199,303.62 200,303.71 201,303.79 202,303.88 203,303.96 204,304.05 205,304.14 206,304.24 207,304.33 208,304.42 209,304.52 210,304.61 211,304.71 212,304.8 213,304.89 214,304.99 215,305.08 216,305.17" fill="none" stroke="#a8621e" stroke-width="2"/>
<polyline points="286,309.81 287,309.81 288,309.82 289,309.82 290,309.83 291,309.83 292,309.84 293,309.85 294,309.85 295,309.86 296,309.86 297,309.87 298,309.87 299,309.88 300,309.89 301,309.82 302,309.75" fill="none" stroke="#a8621e" stroke-width="2"/>
<polyline points="549,293.2 550,293.18 551,293.16 552,293.15 553,293.13 554,293.11 555,293.1 556,293.08 557,293.06 558,293.05 559,293.03 560,293.02 561,293 562,292.98 563,292.97 564,292.95 565,292.93 566,292.92 567,292.9 568,292.88 569,292.87 570,292.85 571,292.83 572,292.82 573,292.8 574,292.78 575,292.77 576,292.75 577,292.73 578,292.72 579,292.7 580,292.5 581,292.31 582,292.11 583,291.91 584,291.71" fill="none" stroke="#a8621e" stroke-width="2"/>
<polyline points="623,287.45 624,287.39 625,287.37 626,287.46 627,287.56 628,287.65 629,287.75 630,287.84 631,287.94 632,288.03 633,288.13 634,288.22 635,288.31 636,288.41 637,288.47 638,288.52 639,288.57 640,288.62 641,288.68 642,288.73 643,288.78 644,288.83 645,288.88 646,288.93 647,288.98 648,289.03 649,289.08 650,289.13 651,289.2 652,289.26 653,289.33 654,289.39 655,289.46 656,289.53 657,289.59 658,289.66 659,289.72 660,289.79 661,289.87 662,289.95 663,290.02 664,290.1 665,290.18 666,290.25" fill="none" stroke="#a8621e" stroke-width="2"/>
<polyline points="704,292.22 705,292.25 706,292.27 707,292.3 708,292.32 709,292.35 710,292.37 711,292.4 712,292.42 713,292.45 714,292.48 715,292.5 716,292.53 717,292.55 718,292.58 719,292.6 720,292.63 721,292.65 722,292.68 723,292.7 724,292.73 725,292.75 726,292.78 727,292.8 728,292.81 729,292.81 730,292.81 731,292.82 732,292.82 733,292.83 734,292.83 735,292.83 736,292.84 737,292.84 738,292.85 739,292.85 740,292.86 741,292.86 742,292.86 743,292.87 744,292.87 745,292.88 746,292.88 747,292.88 748,292.89 749,292.89 750,292.9 751,292.9 752,292.91 753,292.91 754,292.91 755,292.92 756,292.92 757,292.93 758,292.93 759,292.94 760,292.94 761,292.94 762,292.95 763,292.95 764,292.96 765,292.96 766,292.96 767,292.97 768,292.97 769,292.98 770,292.98 771,293.05 772,293.13 773,293.21 774,293.29 775,293.39 776,293.53 777,293.66 778,293.8 779,293.93 780,294.07 781,294.2 782,294.33 783,294.47 784,294.6 785,294.74 786,294.87 787,295.01 788,295.14 789,295.27 790,295.41 791,295.54 792,295.68 793,295.82 794,295.96 795,296.1 796,296.24 797,296.38 798,296.53" fill="none" stroke="#a8621e" stroke-width="2"/>
<clipPath id="ab"><rect x="0" y="0" width="1152" height="354.5"/></clipPath>
<polyline points="15,377 25.3,377 30,372.5 35,377 45,377.5 55,377.5 64,377 65.4,375.3 75.9,356.8 80.7,355.3 90.2,354.9 96,358.7 103.6,352.4 108.4,352.4 113.1,355.7 121.7,361.4 130.3,358.1 141.8,357.2 147.5,353.4 158,351.1 164.7,355.3 174.2,359.1 183.8,355.3 186.7,353.4 193.3,366.7 204.8,369 210.5,373.4 220.1,381.1 231.5,384.9 239.1,379.2 244.8,380.1 252.5,383.5 258.2,383.5 264.9,378.2 271.6,381.1 277.3,380.1 284.9,375.3 291.6,372.5 297.3,362.5 304,359.1 309.8,358.7 315.5,357.2 323.1,361 329.8,367.1 336.5,367.1 343.2,357.6 349.9,365.8 362.3,357.2 374.7,364.4 382.3,361 388.1,351.1 395.7,353.4 401.4,353.4 411,349.5 420.5,347.3 427.2,356.8 433.9,356.2 437.6,354.9 445.3,353 452.9,352.4 460.6,361 468.2,358.1 474.9,357.2 479.7,358.7 485.4,360 493,353 500.7,354.9 512.1,356.2 517.9,353.4 529.3,349.9 538.9,357.2 544.6,351.1 552.2,351.1 559.9,355.7 571.3,360 578,354.3 583.7,344.8 594.2,344.8 597.1,346.7 602.8,344.8 611.4,353.4 616.2,359.1 628.6,364.4 635.3,360.6 642,363.3 647.6,361 660.6,364.3 674.7,361.3 687.7,374.3 701.8,359.1 706.2,360.6 720.3,360.6 727.9,355.2 733.3,354.8 740.9,362.1 748.5,359.1 752.8,357.4 759.4,366.5 767,360.6 772.4,368.2 778.9,367.1 785.4,379.5 791.9,381.2 804.9,374.3 811.4,376.9 818,387.3 824.5,382.3 832,384.5 837.5,382.3 844,380.8 850.5,383.4 863.5,370.4 868.9,368.6 875.5,368.6" fill="none" stroke="#e8862c" stroke-width="1"/>
<polyline points="15,377 25.3,377 30,372.5 35,377 45,377.5 55,377.5 64,377 65.4,375.3 75.9,356.8 80.7,355.3 90.2,354.9 96,358.7 103.6,352.4 108.4,352.4 113.1,355.7 121.7,361.4 130.3,358.1 141.8,357.2 147.5,353.4 158,351.1 164.7,355.3 174.2,359.1 183.8,355.3 186.7,353.4 193.3,366.7 204.8,369 210.5,373.4 220.1,381.1 231.5,384.9 239.1,379.2 244.8,380.1 252.5,383.5 258.2,383.5 264.9,378.2 271.6,381.1 277.3,380.1 284.9,375.3 291.6,372.5 297.3,362.5 304,359.1 309.8,358.7 315.5,357.2 323.1,361 329.8,367.1 336.5,367.1 343.2,357.6 349.9,365.8 362.3,357.2 374.7,364.4 382.3,361 388.1,351.1 395.7,353.4 401.4,353.4 411,349.5 420.5,347.3 427.2,356.8 433.9,356.2 437.6,354.9 445.3,353 452.9,352.4 460.6,361 468.2,358.1 474.9,357.2 479.7,358.7 485.4,360 493,353 500.7,354.9 512.1,356.2 517.9,353.4 529.3,349.9 538.9,357.2 544.6,351.1 552.2,351.1 559.9,355.7 571.3,360 578,354.3 583.7,344.8 594.2,344.8 597.1,346.7 602.8,344.8 611.4,353.4 616.2,359.1 628.6,364.4 635.3,360.6 642,363.3 647.6,361 660.6,364.3 674.7,361.3 687.7,374.3 701.8,359.1 706.2,360.6 720.3,360.6 727.9,355.2 733.3,354.8 740.9,362.1 748.5,359.1 752.8,357.4 759.4,366.5 767,360.6 772.4,368.2 778.9,367.1 785.4,379.5 791.9,381.2 804.9,374.3 811.4,376.9 818,387.3 824.5,382.3 832,384.5 837.5,382.3 844,380.8 850.5,383.4 863.5,370.4 868.9,368.6 875.5,368.6" fill="none" stroke="#c040e0" stroke-width="1.2" clip-path="url(#ab)"/>
<path d="M32 354.8 H875.5 M15 395 H875.5" stroke="#1616b4" stroke-width="2"/>
<g fill="none" stroke="#b3c3d3" stroke-width="1.2">
<rect x="14.5" y="38.5" width="871.0" height="238.5"/>
<rect x="14.5" y="283.5" width="871.0" height="52.5"/>
<rect x="14.5" y="342.5" width="871.0" height="55.5"/>
</g>
<rect x="14.5" y="38.5" width="30.5" height="21.5" fill="#eeeeee"/>
<rect x="14.5" y="38.5" width="30.5" height="4" fill="#d4d4d4"/>
<rect x="18.5" y="46.5" width="9" height="9" rx="1.5" fill="#e0343c" stroke="#9a1822" stroke-width="1"/>
<rect x="31.5" y="46.5" width="9" height="9" rx="1.5" fill="#2a9ad8" stroke="#1a5a9a" stroke-width="1"/>
<text x="45" y="49.7" font-size="11" fill="#2828f0" stroke="#2828f0" stroke-width="0.2" textLength="105" lengthAdjust="spacingAndGlyphs">ential_Moving_Average</text>
<text x="154" y="49.7" font-size="11" fill="#f02424" stroke="#f02424" stroke-width="0.2" textLength="134" lengthAdjust="spacingAndGlyphs">Exponential_Moving_Average</text>
<text x="16.5" y="295" font-size="11" fill="#d83030" textLength="28.5" lengthAdjust="spacingAndGlyphs">MACD</text>
<text x="16" y="354" font-size="11" fill="#ee8a3a" textLength="15" lengthAdjust="spacingAndGlyphs">RSI</text>
<text x="892.6" y="64.4" font-size="11" fill="#f2f0ec" stroke="#f2f0ec" stroke-width="0.3" textLength="33.4" lengthAdjust="spacingAndGlyphs">1.1400</text>
<text x="892.6" y="98.4" font-size="11" fill="#f2f0ec" stroke="#f2f0ec" stroke-width="0.3" textLength="33.4" lengthAdjust="spacingAndGlyphs">1.1300</text>
<text x="892.6" y="132.4" font-size="11" fill="#f2f0ec" stroke="#f2f0ec" stroke-width="0.3" textLength="33.4" lengthAdjust="spacingAndGlyphs">1.1200</text>
<text x="892.6" y="166.4" font-size="11" fill="#f2f0ec" stroke="#f2f0ec" stroke-width="0.3" textLength="33.4" lengthAdjust="spacingAndGlyphs">1.1100</text>
<text x="892.6" y="200.4" font-size="11" fill="#f2f0ec" stroke="#f2f0ec" stroke-width="0.3" textLength="33.4" lengthAdjust="spacingAndGlyphs">1.1000</text>
<text x="892.6" y="234.4" font-size="11" fill="#f2f0ec" stroke="#f2f0ec" stroke-width="0.3" textLength="33.4" lengthAdjust="spacingAndGlyphs">1.0900</text>
<text x="892.6" y="268.4" font-size="11" fill="#f2f0ec" stroke="#f2f0ec" stroke-width="0.3" textLength="33.4" lengthAdjust="spacingAndGlyphs">1.0800</text>
<text x="894" y="295.3" font-size="11" fill="#f2f0ec" stroke="#f2f0ec" stroke-width="0.3" textLength="27.2" lengthAdjust="spacingAndGlyphs">+0.01</text>
<text x="894" y="322" font-size="11" fill="#f2f0ec" stroke="#f2f0ec" stroke-width="0.3" textLength="23.7" lengthAdjust="spacingAndGlyphs">-0.00</text>
<text x="893.7" y="381.2" font-size="11" fill="#f2f0ec" stroke="#f2f0ec" stroke-width="0.3" textLength="10.8" lengthAdjust="spacingAndGlyphs">50</text>
<rect x="885" y="70" width="48" height="20.8" fill="#ffffff"/>
<text x="894" y="84" font-size="10.8" fill="#2f2f42" textLength="32.4" lengthAdjust="spacingAndGlyphs">1.1333</text>
<g font-size="11" fill="#f2f0ec" stroke="#f2f0ec" stroke-width="0.15" text-anchor="middle">
<text x="52.5" y="420.8">18/Пн</text>
<text x="91.5" y="420.8">19/Вт</text>
<text x="130.5" y="420.8">20/Ср</text>
<text x="169.5" y="420.8">21/Чт</text>
<text x="208.5" y="420.8">22/Пт</text>
<text x="247.5" y="420.8">25/Пн</text>
<text x="286.5" y="420.8">26/Вт</text>
<text x="325.5" y="420.8">27/Ср</text>
<text x="364.5" y="420.8">28/Чт</text>
<text x="403.5" y="420.8">29/Пт</text>
<text x="444.2" y="420.8">1/Пн</text>
<text x="483.2" y="420.8">2/Вт</text>
<text x="522.2" y="420.8">3/Ср</text>
<text x="561.2" y="420.8">4/Чт</text>
<text x="600.2" y="420.8">5/Пт</text>
<text x="639.2" y="420.8">8/Пн</text>
<text x="679.2" y="420.8">9/Вт</text>
<text x="716.5" y="420.8">10/Ср</text>
<text x="755.5" y="420.8">11/Чт</text>
<text x="794.5" y="420.8">12/Пт</text>
<text x="833.5" y="420.8">15/Пн</text>
<text x="872.5" y="420.8">16/Вт</text>
</g>
<rect x="15" y="375.5" width="62.5" height="19" rx="1.5" fill="#5b6a7d" stroke="#9fb4cb" stroke-width="1"/>
<text x="46.25" y="389" font-size="11" fill="#eef2f6" stroke="#eef2f6" stroke-width="0.25" text-anchor="middle" textLength="49" lengthAdjust="spacingAndGlyphs">Май 2020</text>
<rect x="440.5" y="375.5" width="70" height="19" rx="1.5" fill="#5b6a7d" stroke="#9fb4cb" stroke-width="1"/>
<text x="475.5" y="389" font-size="11" fill="#eef2f6" stroke="#eef2f6" stroke-width="0.25" text-anchor="middle" textLength="56" lengthAdjust="spacingAndGlyphs">Июнь 2020</text>
<path d="M15 375 V402" stroke="#c8e0d8" stroke-width="1.5"/>
<path d="M440.5 375 V402" stroke="#c8e0d8" stroke-width="1.5"/>
</svg></body></html>
